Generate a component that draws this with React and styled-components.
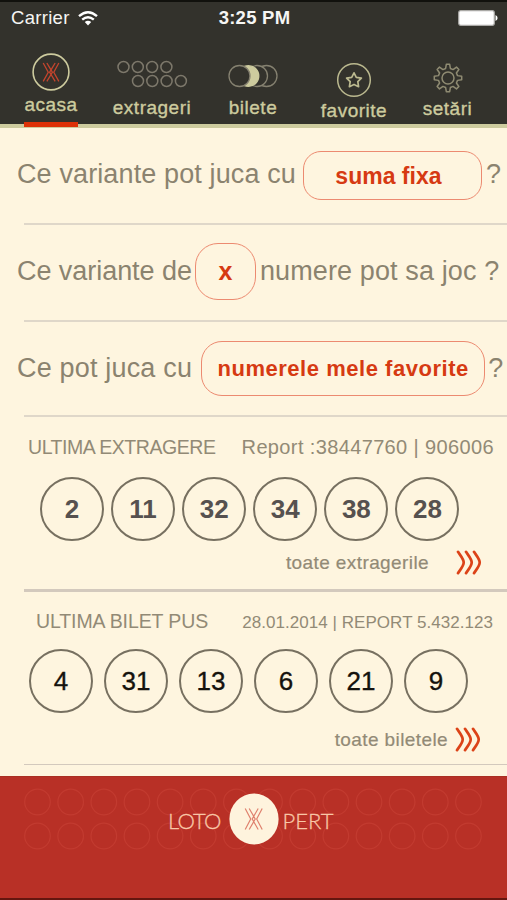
import React from 'react';
import styled, { createGlobalStyle } from 'styled-components';

const Global = createGlobalStyle`
  *{box-sizing:border-box}
  body{margin:0;background:#fef5df;font-family:"Liberation Sans",Arial,sans-serif}
`;
const Screen = styled.main`
  width:507px;height:900px;display:flex;flex-direction:column;overflow:hidden;background:#fef5df;
`;
const Header = styled.header`
  height:128px;background:#33322c;border-top:2px solid #11110d;border-bottom:4px solid #cdcb9e;
  display:flex;flex-direction:column;flex:none;
`;
const StatusBar = styled.div`
  height:34px;display:grid;grid-template-columns:1fr auto 1fr;align-items:center;
  padding:0 9px 0 11px;color:#f6f6f4;font-size:18.5px;line-height:20px;
`;
const Carrier = styled.span`display:flex;align-items:center;gap:8px;letter-spacing:.3px;`;
const Time = styled.span`font-weight:700;font-size:18.5px;letter-spacing:.25px;`;
const Battery = styled.svg`justify-self:end;display:block;`;
const Tabs = styled.nav`display:flex;height:92px;padding-left:24px;`;
const Tab = styled.a`
  width:${p => p.$w}px;margin-right:${p => p.$gap}px;padding-top:${p => p.$top}px;
  display:flex;flex-direction:column;align-items:center;flex:none;color:#cdcb9e;
  border-bottom:5px solid ${p => (p.$active ? '#dc3108' : 'transparent')};
  margin-bottom:-3px;
  svg{display:block;flex:none}
`;
const TabLabel = styled.span`
  font-size:19px;line-height:22px;white-space:nowrap;letter-spacing:${p => p.$ls}px;
  margin-top:${p => p.$mt}px;-webkit-text-stroke:.35px currentColor;
`;
const Question = styled.section`
  height:${p => p.$h}px;margin-left:24px;border-bottom:2px solid #dfd7c9;
  flex:none;display:flex;align-items:flex-start;padding-top:${p => p.$top}px;
`;
const Phrase = styled.span`
  font-size:27px;line-height:32px;color:#8b836f;white-space:nowrap;
  letter-spacing:${p => p.$ls || 0}px;margin:${p => p.$mt}px 0 0 ${p => p.$ml}px;
`;
const Pill = styled.button`
  width:${p => p.$w}px;height:${p => p.$h}px;border:1.5px solid #ec8a70;border-radius:${p => p.$r}px;
  margin-left:${p => p.$ml}px;background:transparent;color:#d63a12;padding:${p => p.$pad || 0}px ${p => p.$pr || 0}px 0 0;
  font:700 ${p => p.$size}px "Liberation Sans",Arial,sans-serif;letter-spacing:${p => p.$ls}px;
  white-space:nowrap;flex:none;
`;
const Draw = styled.section`
  height:${p => p.$h}px;margin-left:24px;border-bottom:${p => p.$line}px solid #d3c9bd;
  flex:none;display:flex;flex-direction:column;
`;
const DrawHead = styled.div`
  display:flex;justify-content:space-between;align-items:baseline;color:#928a76;white-space:nowrap;
  height:22px;line-height:22px;margin:${p => p.$top}px ${p => p.$r}px 0 ${p => p.$l}px;
`;
const Title = styled.h2`margin:0;font-size:19.5px;font-weight:400;letter-spacing:${p => p.$ls}px;`;
const Report = styled.span`font-size:${p => p.$size}px;letter-spacing:${p => p.$ls}px;`;
const Balls = styled.div`
  display:flex;gap:${p => p.$gap}px;margin:${p => p.$top}px 0 0 ${p => p.$l}px;height:64px;
`;
const Ball = styled.span`
  width:64px;height:64px;border:2px solid #777060;border-radius:50%;flex:none;
  display:flex;align-items:center;justify-content:center;
  font-size:26px;font-weight:${p => (p.$bold ? 700 : 400)};color:${p => (p.$bold ? '#56514f' : '#15120d')};
  -webkit-text-stroke:${p => (p.$bold ? 0 : .35)}px currentColor;
`;
const More = styled.a`
  display:flex;justify-content:flex-end;align-items:center;gap:${p => p.$gap}px;height:26px;
  margin:${p => p.$top}px ${p => p.$r}px 0 0;color:#928a76;font-size:19px;letter-spacing:${p => p.$ls}px;
`;
const MoreText = styled.span`padding-top:2px;-webkit-text-stroke:.2px currentColor;`;
const Footer = styled.footer`
  flex:1;min-height:0;margin-top:11px;background:#b83026;border-top:1px solid #a92f22;
  border-bottom:2px solid #64160f;display:grid;grid-template-columns:507px;align-items:start;
`;
const Pattern = styled.svg`grid-area:1/1;display:block;margin:11px 0 0 24px;`;
const Brand = styled.div`
  grid-area:1/1;display:flex;align-items:center;margin:16px 0 0 168px;height:52px;color:#f8c6a6;
  font:300 22px Lato,"Liberation Sans",sans-serif;
  svg{display:block;flex:none}
`;
const BrandWord = styled.span`
  width:${p => p.$w}px;letter-spacing:${p => p.$ls}px;padding:2px 0 0 ${p => p.$pl}px;white-space:nowrap;
  -webkit-text-stroke:.3px currentColor;
`;

const Wifi = () => (
  <svg width="20" height="15" viewBox="0 0 20 15" fill="none" stroke="#fff" strokeWidth="2.4">
    <path d="M1 5.2Q10-2.6 19 5.2M4.2 8.7Q10 3.8 15.8 8.7" />
    <path d="M6.8 11Q10 8.5 13.2 11L10 14.6Z" fill="#fff" stroke="none" />
  </svg>
);

/* Two outer chevrons flanking a pair of small Vs that meet at the centre. */
const CrossPaths = () => (
  <path d="M0 0L5.5 10L0 20M17 0L11.5 10L17 20M4 0L8.5 7.5L13 0M4 20L8.5 12.5L13 20M8.5 7.5L7 10L8.5 12.5L10 10Z" />
);

const HomeIcon = () => (
  <svg width="38" height="38" viewBox="0 0 38 38" fill="none">
    <circle cx="19" cy="19" r="17.9" stroke="#cdcb9e" strokeWidth="1.6" />
    <g transform="translate(11.2 10) scale(.92)" stroke="#c5452d" strokeWidth="1.4"><CrossPaths /></g>
  </svg>
);
const DrawsIcon = () => (
  <svg width="72" height="28" viewBox="0 0 72 28" fill="none" stroke="#7d786b" strokeWidth="1.5">
    {[0, 1, 2, 3].map(i => (
      <React.Fragment key={i}>
        <circle cx={7.5 + i * 14.3} cy="7" r="5.5" />
        <circle cx={22 + i * 14.3} cy="21" r="5.5" />
      </React.Fragment>
    ))}
  </svg>
);
const TicketsIcon = () => (
  <svg width="50" height="24" viewBox="0 0 50 24" fill="none" stroke="#858170" strokeWidth="1.3">
    <circle cx="38.5" cy="12" r="10.5" />
    <circle cx="29" cy="12" r="10.5" fill="#33322c" />
    <circle cx="20.5" cy="12" r="10.3" fill="#cdcb9e" stroke="#cdcb9e" />
    <circle cx="11.5" cy="12" r="10.5" fill="#33322c" />
  </svg>
);
const FavIcon = () => (
  <svg width="36" height="36" viewBox="0 0 36 36" fill="none" stroke="#bbb98f">
    <circle cx="18" cy="18" r="16.3" strokeWidth="1.5" />
    <path d="M18 10.8L20.3 15.3L25.4 16.1L21.8 19.7L22.6 24.7L18 22.4L13.4 24.7L14.2 19.7L10.6 16.1L15.7 15.3Z" strokeWidth="1.7" strokeLinejoin="round" />
  </svg>
);
const gearPath = (() => {
  const pts = [];
  for (let i = 0; i < 8; i += 1) {
    [[-14, 9.8], [-7, 13.8], [7, 13.8], [14, 9.8]].forEach(([a, r]) => {
      const t = ((i * 45 + a) * Math.PI) / 180;
      pts.push(`${(15 + r * Math.sin(t)).toFixed(2)} ${(15 - r * Math.cos(t)).toFixed(2)}`);
    });
  }
  return `M${pts.join('L')}Z`;
})();
const GearIcon = () => (
  <svg width="30" height="30" viewBox="0 0 30 30" fill="none" stroke="#8f8b72" strokeWidth="1.5" strokeLinejoin="round">
    <path d={gearPath} />
    <circle cx="15" cy="15" r="6" />
  </svg>
);
const Chevrons = () => (
  <svg width="26" height="25" viewBox="0 0 26 25" fill="none" stroke="#dc4318" strokeWidth="2.7" strokeLinecap="round">
    {[0, 8, 16].map(x => <path key={x} d={`M${x + 2} 1.8C${x + 4} 5 ${x + 7.7} 9 ${x + 7.7} 12.5S${x + 4} 20 ${x + 2} 23.2`} />)}
  </svg>
);
const BrandMark = () => (
  <svg width="50" height="52" viewBox="0 0 50 52" fill="none">
    <ellipse cx="25" cy="26" rx="24.6" ry="25.5" fill="#fef3dd" />
    <g transform="translate(16.2 15.5) scale(1 1.05)" stroke="#df806d" strokeWidth="1.2"><CrossPaths /></g>
  </svg>
);

export default function App() {
  return (
    <>
      <Global />
      <Screen>
        <Header>
          <StatusBar>
            <Carrier>Carrier <Wifi /></Carrier>
            <Time>3:25 PM</Time>
            <Battery width="40" height="16" viewBox="0 0 40 16">
              <rect x=".7" y=".7" width="35.6" height="14.6" rx="2" fill="#fff" stroke="#aaa9a6" strokeWidth="1.2" />
              <path d="M37.5 5Q39.6 6 39.6 8T37.5 11Z" fill="#fff" />
            </Battery>
          </StatusBar>
          <Tabs>
            <Tab $w={54} $gap={34} $top={18} $active><HomeIcon /><TabLabel $ls={0.5} $mt={3}>acasa</TabLabel></Tab>
            <Tab $w={80} $gap={36} $top={25}><DrawsIcon /><TabLabel $ls={0.5} $mt={9}>extrageri</TabLabel></Tab>
            <Tab $w={50} $gap={42} $top={29}><TicketsIcon /><TabLabel $ls={0.5} $mt={9}>bilete</TabLabel></Tab>
            <Tab $w={68} $gap={34} $top={27}><FavIcon /><TabLabel $ls={0.5} $mt={2}>favorite</TabLabel></Tab>
            <Tab $w={51} $gap={0} $top={28}><GearIcon /><TabLabel $ls={0.5} $mt={5}>setări</TabLabel></Tab>
          </Tabs>
        </Header>

        <Question $h={97} $top={23}>
          <Phrase $ml={-7} $mt={7} $ls={0.12}>Ce variante pot juca cu</Phrase>
          <Pill $w={179} $h={49} $r={18} $ml={7} $size={23} $ls={0} $pad={2} $pr={8}>suma fixa</Pill>
          <Phrase $ml={4} $mt={7}>?</Phrase>
        </Question>
        <Question $h={97} $top={18}>
          <Phrase $ml={-7} $mt={12} $ls={-0.05}>Ce variante de</Phrase>
          <Pill $w={61} $h={57} $r={23} $ml={3} $size={25} $ls={0}>x</Pill>
          <Phrase $ml={4} $mt={12} $ls={0.12}>numere pot sa joc ?</Phrase>
        </Question>
        <Question $h={95} $top={19}>
          <Phrase $ml={-7} $mt={11} $ls={0.18}>Ce pot juca cu</Phrase>
          <Pill $w={284} $h={55} $r={21} $ml={9} $size={22} $ls={0.53}>numerele mele favorite</Pill>
          <Phrase $ml={3} $mt={11}>?</Phrase>
        </Question>

        <Draw $h={175} $line={3}>
          <DrawHead $top={19} $l={4} $r={13}>
            <Title $ls={-0.45}>ULTIMA EXTRAGERE</Title>
            <Report $size={20} $ls={0.37}>Report :38447760 | 906006</Report>
          </DrawHead>
          <Balls $gap={7.1} $top={19} $l={16}>
            {[2, 11, 32, 34, 38, 28].map(n => <Ball key={n} $bold>{n}</Ball>)}
          </Balls>
          <More $gap={27} $top={8} $r={25} $ls={0.4}><MoreText>toate extragerile</MoreText><Chevrons /></More>
        </Draw>

        <Draw $h={173} $line={1}>
          <DrawHead $top={18} $l={12} $r={14}>
            <Title $ls={-0.1}>ULTIMA BILET PUS</Title>
            <Report $size={17} $ls={0.04}>28.01.2014 | REPORT 5.432.123</Report>
          </DrawHead>
          <Balls $gap={11} $top={17} $l={5}>
            {[4, 31, 13, 6, 21, 9].map(n => <Ball key={n}>{n}</Ball>)}
          </Balls>
          <More $gap={7} $top={13} $r={26} $ls={0.4}><MoreText>toate biletele</MoreText><Chevrons /></More>
        </Draw>

        <Footer>
          <Pattern width="460" height="64" viewBox="0 0 460 64" fill="none" stroke="#c23b30" strokeWidth="1.2">
            {Array.from({ length: 28 }, (_, i) => (
              <circle key={i} cx={13.5 + (i % 14) * 33.15} cy={i < 14 ? 14 : 48} r="12.8" />
            ))}
          </Pattern>
          <Brand>
            <BrandWord $w={60.5} $ls={-0.8} $pl={0}>LOTO</BrandWord>
            <BrandMark />
            <BrandWord $w={60} $ls={0} $pl={4}>PERT</BrandWord>
          </Brand>
        </Footer>
      </Screen>
    </>
  );
}
